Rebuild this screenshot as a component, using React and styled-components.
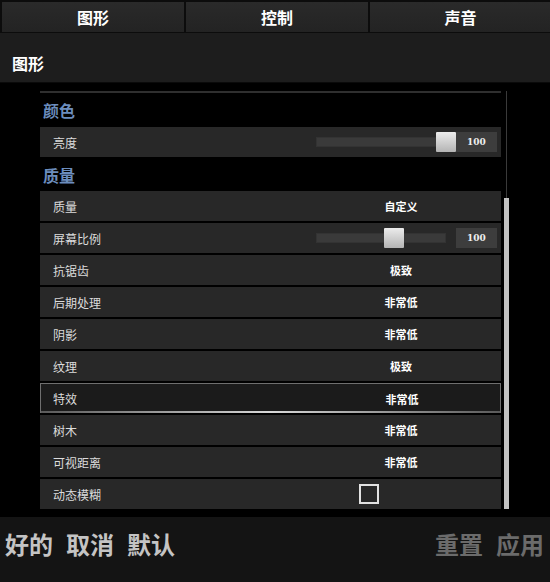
import React from 'react';
import styled, { createGlobalStyle } from 'styled-components';

const Global = createGlobalStyle`
  html, body { margin: 0; padding: 0; background: #000; }
  body { font-family: "Noto Sans CJK SC", "Noto Sans", sans-serif; }
  #root { width: 550px; height: 582px; overflow: hidden; }
`;

const Screen = styled.div`
  width: 550px;
  height: 582px;
  display: flex;
  flex-direction: column;
  background: #000;
`;

const TabBar = styled.div`
  display: grid;
  grid-template-columns: 182px 182px 181px;
  column-gap: 2px;
  height: 33px;
  box-sizing: border-box;
  padding: 2px 1px 1px 2px;
  background: #0c0c0c;
`;

const Tab = styled.div`
  display: flex;
  align-items: center;
  justify-content: center;
  background: linear-gradient(#2a2a2a, #232323);
  color: #fff;
  font-weight: 700;
  font-size: 16px;
  line-height: 1;
`;

const Header = styled.div`
  height: 50px;
  box-sizing: border-box;
  padding: 10px 0 0 12px;
  display: flex;
  align-items: center;
  background: #1d1d1d;
  border-bottom: 1px solid #0a0a0a;
  color: #fff;
  font-weight: 700;
  font-size: 16px;
`;

const Main = styled.div`
  flex: 1;
  display: flex;
  padding-left: 40px;
  background: #000;
  min-height: 0;
`;

const Content = styled.div`
  width: 461px;
  display: flex;
  flex-direction: column;
  padding-top: 8px;
`;

const Separator = styled.div`
  height: 2px;
  background: #2f2f2f;
`;

const SectionTitle = styled.div`
  height: ${p => p.$h}px;
  margin-top: ${p => p.$mt || 0}px;
  display: flex;
  align-items: center;
  padding-left: 3px;
  color: #6c8dbd;
  font-weight: 700;
  font-size: 16px;
`;

const RowList = styled.div`
  display: flex;
  flex-direction: column;
  gap: 2px;
`;

const Row = styled.div`
  height: 30px;
  box-sizing: border-box;
  display: grid;
  grid-template-columns: 261px 200px;
  align-items: center;
  background: ${p => p.$selected
    ? 'linear-gradient(to right, #5a5a5a, #d8d8d8 50%, #5a5a5a) bottom / 100% 2px no-repeat, #1b1b1b'
    : '#282828'};
  border: ${p => p.$selected ? '1px solid #6f6f6f' : 'none'};
  border-bottom: none;
`;

const Label = styled.div`
  padding-left: ${p => p.$selected ? 12 : 13}px;
  color: #dcdcdc;
  font-size: 12px;
`;

const Value = styled.div`
  display: flex;
  align-items: center;
  justify-content: center;
  color: #fff;
  font-weight: 700;
  font-size: 11px;
`;

const SliderCell = styled.div`
  display: flex;
  align-items: center;
  gap: 10px;
  padding-left: 15px;
`;

const Track = styled.div`
  position: relative;
  width: 130px;
  height: 10px;
  background: #3a3a3a;
  box-shadow: inset 0 0 0 1px #333;
`;

const Thumb = styled.div`
  position: absolute;
  top: -5px;
  width: 20px;
  height: 20px;
  background: linear-gradient(#ececec, #b4b4b4);
  border-radius: 1px;
`;

const ValueBox = styled.div`
  width: 41px;
  height: 20px;
  display: flex;
  align-items: center;
  justify-content: center;
  background: #3d3d3d;
  color: #eee;
  font-family: "DejaVu Serif", "Liberation Serif", serif;
  font-weight: 700;
  font-size: 9px;
`;

const CheckCell = styled.div`
  display: flex;
  align-items: center;
  padding-left: 58px;
`;

const Checkbox = styled.div`
  width: 20px;
  height: 20px;
  box-sizing: border-box;
  border: 2px solid #e2e2e2;
`;

const ScrollCol = styled.div`
  width: 5px;
  margin-left: 3px;
  padding-top: 8px;
  display: flex;
  flex-direction: column;
  align-items: center;
`;

const ScrollLine = styled.div`
  width: 1px;
  height: 107px;
  background: #3a3a3a;
`;

const ScrollThumb = styled.div`
  width: 5px;
  height: 311px;
  background: #c2c2c2;
`;

const Footer = styled.div`
  height: 65px;
  box-sizing: border-box;
  display: flex;
  justify-content: space-between;
  align-items: center;
  padding: 0 6px 12px 5px;
  background: #141414;
`;

const ButtonGroup = styled.div`
  display: flex;
  gap: 13px;
`;

const FooterButton = styled.div`
  color: ${p => p.$dim ? '#6b6b6b' : '#c4c4c4'};
  font-weight: 700;
  font-size: 24px;
  line-height: 1;
`;

const Slider = ({ pct }) => (
  <SliderCell>
    <Track>
      <Thumb style={{ left: `calc(${pct}% - 10px)` }} />
    </Track>
    <ValueBox>100</ValueBox>
  </SliderCell>
);

const qualityRows = [
  { label: '质量', value: '自定义' },
  { label: '屏幕比例', slider: 60 },
  { label: '抗锯齿', value: '极致' },
  { label: '后期处理', value: '非常低' },
  { label: '阴影', value: '非常低' },
  { label: '纹理', value: '极致' },
  { label: '特效', value: '非常低', selected: true },
  { label: '树木', value: '非常低' },
  { label: '可视距离', value: '非常低' },
  { label: '动态模糊', check: true },
];

export default function App() {
  return (
    <Screen>
      <Global />
      <TabBar>
        <Tab>图形</Tab>
        <Tab>控制</Tab>
        <Tab>声音</Tab>
      </TabBar>
      <Header>图形</Header>
      <Main>
        <Content>
          <Separator />
          <SectionTitle $h={34}>颜色</SectionTitle>
          <RowList>
            <Row>
              <Label>亮度</Label>
              <Slider pct={100} />
            </Row>
          </RowList>
          <SectionTitle $h={32} $mt={2}>质量</SectionTitle>
          <RowList>
            {qualityRows.map(r => (
              <Row key={r.label} $selected={r.selected}>
                <Label $selected={r.selected}>{r.label}</Label>
                {r.slider !== undefined ? (
                  <Slider pct={r.slider} />
                ) : r.check ? (
                  <CheckCell><Checkbox /></CheckCell>
                ) : (
                  <Value>{r.value}</Value>
                )}
              </Row>
            ))}
          </RowList>
        </Content>
        <ScrollCol>
          <ScrollLine />
          <ScrollThumb />
        </ScrollCol>
      </Main>
      <Footer>
        <ButtonGroup>
          <FooterButton>好的</FooterButton>
          <FooterButton>取消</FooterButton>
          <FooterButton>默认</FooterButton>
        </ButtonGroup>
        <ButtonGroup>
          <FooterButton $dim>重置</FooterButton>
          <FooterButton $dim>应用</FooterButton>
        </ButtonGroup>
      </Footer>
    </Screen>
  );
}
